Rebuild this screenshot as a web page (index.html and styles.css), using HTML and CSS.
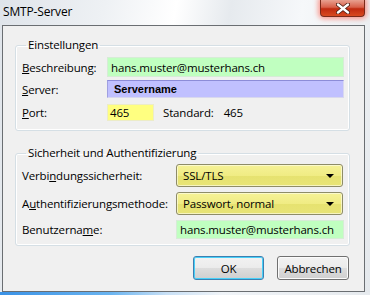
FILE: index.html
```html
<!DOCTYPE html>
<html>
<head>
<meta charset="utf-8">
<link rel="stylesheet" href="styles.css">
</head>
<body>
<div class="frame">
  <div class="titlebar">
    <span class="title">SMTP-Server</span>
    <div class="close">
      <svg width="14" height="11" viewBox="0 0 14 11"><path d="M2 1.5 L12 9.5 M12 1.5 L2 9.5" stroke="#4a1a10" stroke-width="4" stroke-linecap="round"/><path d="M2 1.5 L12 9.5 M12 1.5 L2 9.5" stroke="#ffffff" stroke-width="2.4" stroke-linecap="round"/></svg>
    </div>
  </div>
  <div class="client">
    <fieldset class="group g1">
      <legend>Einstellungen</legend>
      <div class="row r1">
        <span class="label"><u>B</u>eschreibung:</span>
        <div class="field green">hans.muster@musterhans.ch</div>
      </div>
      <div class="row r2">
        <span class="label"><u>S</u>erver:</span>
        <div class="field purple">Servername</div>
      </div>
      <div class="row r3">
        <span class="label"><u>P</u>ort:</span>
        <div class="port-line">
          <div class="field yellow port">465</div>
          <span class="std">Standard:</span>
          <span class="stdval">465</span>
        </div>
      </div>
    </fieldset>
    <fieldset class="group g2">
      <legend>Sicherheit und Authentifizierung</legend>
      <div class="row d1">
        <span class="label">Verbi<u>n</u>dungssicherheit:</span>
        <div class="combo"><span>SSL/TLS</span><i class="arrow"></i></div>
      </div>
      <div class="row d2">
        <span class="label">A<u>u</u>thentifizierungsmethode:</span>
        <div class="combo"><span>Passwort, normal</span><i class="arrow"></i></div>
      </div>
      <div class="row d3">
        <span class="label">Benutzerna<u>m</u>e:</span>
        <div class="field green">hans.muster@musterhans.ch</div>
      </div>
    </fieldset>
    <div class="buttons">
      <div class="btn default">OK</div>
      <div class="btn">Abbrechen</div>
    </div>
  </div>
  <div class="bottom-glow"></div>
</div>
</body>
</html>
```

FILE: styles.css
```css
* { box-sizing: border-box; }
html, body { margin: 0; padding: 0; }
body {
  width: 370px;
  height: 295px;
  overflow: hidden;
  font-family: "Open Sans", "Noto Sans", sans-serif;
  font-size: 11.5px;
  letter-spacing: -0.15px;
  color: #000;
  background: linear-gradient(100deg, #dfe4ea 0%, #eef1f4 25%, #ffffff 42%, #e6eaee 55%, #f6f8fa 72%, #e4e8ec 100%);
}
.frame {
  width: 370px;
  height: 295px;
  display: flex;
  flex-direction: column;
}
.titlebar {
  height: 25px;
  display: flex;
  justify-content: space-between;
  align-items: flex-start;
  padding-left: 3px;
  padding-right: 5px;
}
.title {
  margin-top: 4px;
  font-size: 12px;
  line-height: 15px;
}
.close {
  width: 45px;
  height: 17px;
  border: 1px solid #7a2a1a;
  border-top: none;
  border-radius: 0 0 4px 4px;
  background: linear-gradient(#e8a090 0%, #d8604a 45%, #c02a10 55%, #d84a20 100%);
  box-shadow: 0 0 5px 2px rgba(255, 80, 60, 0.55);
  display: flex;
  align-items: center;
  justify-content: center;
}
.close svg { display: block; }
.client {
  margin-left: 2px;
  width: 363px;
  height: 267px;
  border: 1px solid #6a6e72;
  background: #f0f0f0;
  padding: 0 14px 0 12px;
}
.group {
  margin: 0;
  border: 1px solid #d5dfe5;
  border-radius: 3px;
  box-shadow: inset 0 0 0 1px #fff;
  padding: 0 5px 0 6px;
  min-width: 0;
}
.group legend {
  padding: 0 2px;
  margin-left: 4px;
  line-height: 14px;
}
.g1 { margin-top: 12px; height: 93px; padding-top: 5px; }
.g2 { margin-top: 15px; height: 100px; padding-top: 4px; }
.row { display: flex; align-items: center; }
.g1 .label { width: 85px; flex: none; }
.g2 .label { width: 154px; flex: none; }
.label { white-space: nowrap; }
.field {
  flex: 1;
  height: 100%;
  display: flex;
  align-items: center;
  padding-left: 3px;
  white-space: nowrap;
}
.green { background: #c0ffc0; border: 1px solid #d6ecd6; }
.purple {
  background: #c0c0ff;
  border: 1px solid #d8d8ee;
  border-top-color: #8c8cd8;
  border-left-color: #a0a0e0;
  font-family: "Liberation Sans", Arial, sans-serif;
  font-weight: bold;
  font-size: 11px;
  letter-spacing: 0;
  padding-left: 6px;
}
.yellow { background: #ffff80; border: 1px solid #ececc8; }
.r1 { height: 20px; }
.r2 { height: 18px; margin-top: 3px; }
.r3 { height: 17px; margin-top: 6px; }
.port-line { display: flex; align-items: center; height: 100%; flex: 1; }
.port { flex: none; width: 47px; padding-left: 2px; }
.std { margin-left: 9px; }
.stdval { margin-left: 10px; }
.d1 { height: 23px; }
.d2 { height: 23px; margin-top: 5px; }
.d3 { height: 19px; margin-top: 5px; }
.combo {
  flex: 1;
  height: 100%;
  margin-right: 1px;
  border: 1px solid #8e8c68;
  border-radius: 3px;
  background: linear-gradient(#f6f296 0%, #f0ec84 50%, #e6e270 51%, #e8e476 100%);
  box-shadow: inset 0 0 0 1px rgba(255, 255, 240, 0.6);
  display: flex;
  align-items: center;
  justify-content: space-between;
  padding: 0 8px 0 6px;
}
.arrow {
  width: 0;
  height: 0;
  border-left: 4px solid transparent;
  border-right: 4px solid transparent;
  border-top: 4px solid #000;
}
.buttons {
  display: flex;
  justify-content: flex-end;
  gap: 13px;
  margin-top: 10px;
  padding-right: 1px;
}
.btn {
  width: 72px;
  height: 24px;
  border: 1px solid #707070;
  border-radius: 3px;
  background: linear-gradient(#f2f2f2 0%, #ebebeb 50%, #dddddd 51%, #cfcfcf 100%);
  box-shadow: inset 0 0 0 1px #fbfbfb;
  display: flex;
  align-items: center;
  justify-content: center;
}
.btn.default {
  width: 71px;
  border-color: #3c7fb1;
  box-shadow: inset 0 0 0 1px #48d0f8;
}
.bottom-glow {
  flex: 1;
  background: linear-gradient(90deg, #3a92e6 0%, #6ab4f0 30%, #c8e0f6 45%, #f0f4f8 60%, #e6eaee 100%);
}
```
